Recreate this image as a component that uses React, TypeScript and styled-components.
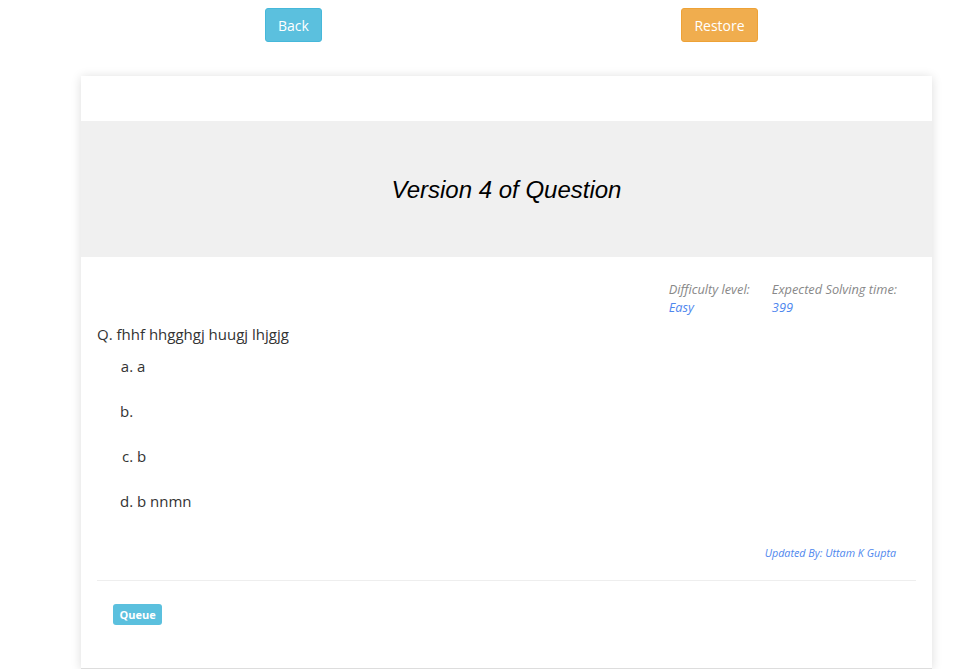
import React from "react";
import styled, { createGlobalStyle } from "styled-components";

const Global = createGlobalStyle`
  html, body { margin: 0; padding: 0; background: #fff; }
  body { font-family: "Open Sans", "Liberation Sans", sans-serif; color: #333; }
`;

const TopBar = styled.div`
  display: flex;
  align-items: center;
  padding: 8px 0 0 265px;
  gap: 359px;
`;

const Btn = styled.button<{ $bg: string; $border: string; $pad: number }>`
  height: 34px;
  padding: 0 ${(p) => p.$pad}px;
  font-family: "Open Sans", sans-serif;
  font-size: 14px;
  color: #fff;
  background: ${(p) => p.$bg};
  border: 1px solid ${(p) => p.$border};
  border-radius: 3px;
  cursor: pointer;
`;

const Card = styled.div`
  margin: 34px 0 0 81px;
  width: 851px;
  background: #fff;
  box-shadow: 0 1px 10px rgba(0, 0, 0, 0.14);
  border-bottom: 1px solid #ddd;
  padding-top: 45px;
  box-sizing: border-box;
  height: 593px;
`;

const Band = styled.div`
  height: 136px;
  box-sizing: border-box;
  padding-top: 2px;
  background: #f0f0f0;
  display: flex;
  align-items: center;
  justify-content: center;
`;

const Title = styled.h2`
  margin: 0;
  font-family: "Liberation Sans", Arial, sans-serif;
  font-style: italic;
  font-weight: 400;
  font-size: 24px;
  color: #000;
`;

const Body = styled.div`
  padding: 23px 16px 0 16px;
`;

const MetaRow = styled.div`
  display: flex;
  justify-content: flex-end;
  gap: 22px;
  padding-right: 19px;
`;

const MetaCol = styled.div`
  display: flex;
  flex-direction: column;
  font-style: italic;
  font-size: 12.8px;
  line-height: 18px;
`;

const MetaLabel = styled.span`
  color: #888;
`;

const MetaValue = styled.span`
  color: #4f87ee;
`;

const Question = styled.div`
  margin-top: 8px;
  font-size: 15px;
  line-height: 20px;
  color: #333;
`;

const Options = styled.ol`
  list-style: lower-alpha;
  margin: 12px 0 0 0;
  padding-left: 40px;
  font-size: 15px;
  line-height: 20px;
  color: #333;
`;

const Option = styled.li`
  height: 20px;
  margin-bottom: 25px;
  &:last-child { margin-bottom: 0; }
`;

const Updated = styled.div`
  margin-top: 34px;
  text-align: right;
  padding-right: 20px;
  font-style: italic;
  font-size: 10.75px;
  line-height: 16px;
  color: #4f87ee;
`;

const Rule = styled.hr`
  margin: 19px 0 0 0;
  border: 0;
  border-top: 1px solid #eee;
`;

const Label = styled.span`
  display: inline-block;
  margin: 23px 0 0 16px;
  height: 21px;
  line-height: 21px;
  padding: 0 6.5px;
  background: #5bc0de;
  color: #fff;
  font-size: 11px;
  font-weight: 700;
  border-radius: 3px;
`;

export default function App() {
  const options = ["a", "", "b", "b nnmn"];
  return (
    <>
      <Global />
      <TopBar>
        <Btn $bg="#5bc0de" $border="#46b8da" $pad={12}>Back</Btn>
        <Btn $bg="#f0ad4e" $border="#eea236" $pad={12.5}>Restore</Btn>
      </TopBar>
      <Card>
        <Band>
          <Title>Version 4 of Question</Title>
        </Band>
        <Body>
          <MetaRow>
            <MetaCol>
              <MetaLabel>Difficulty level:</MetaLabel>
              <MetaValue>Easy</MetaValue>
            </MetaCol>
            <MetaCol>
              <MetaLabel>Expected Solving time:</MetaLabel>
              <MetaValue>399</MetaValue>
            </MetaCol>
          </MetaRow>
          <Question>Q. fhhf hhgghgj huugj lhjgjg</Question>
          <Options>
            {options.map((o, i) => (
              <Option key={i}>{o}</Option>
            ))}
          </Options>
          <Updated>Updated By: Uttam K Gupta</Updated>
          <Rule />
          <Label>Queue</Label>
        </Body>
      </Card>
    </>
  );
}
